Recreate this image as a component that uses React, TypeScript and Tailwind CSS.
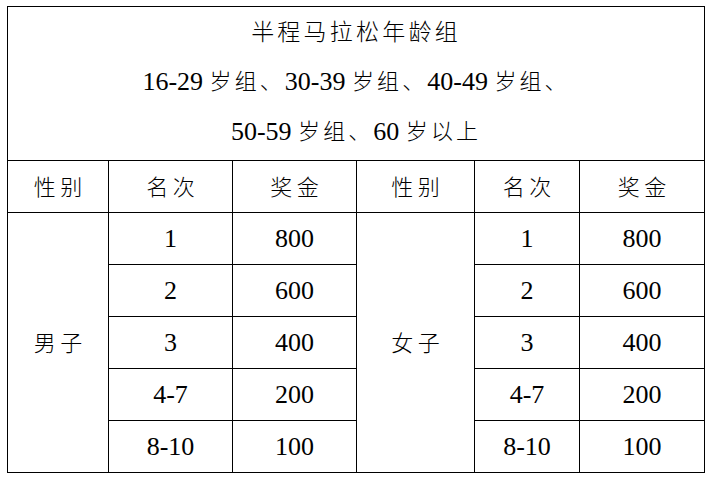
import React from "react";

const rows: { rank: string; prize: string }[] = [
  { rank: "1", prize: "800" },
  { rank: "2", prize: "600" },
  { rank: "3", prize: "400" },
  { rank: "4-7", prize: "200" },
  { rank: "8-10", prize: "100" },
];

const cell = "border border-black text-center align-middle p-0 h-[52px]";
const cjk = "font-light text-[22px] tracking-[0.2em] pl-[0.2em]";

// CJK text in the source is a thin Song face, set a little apart
const Han = ({ children }: { children: React.ReactNode }) => (
  <span className="font-light text-[22px] tracking-[0.14em]">{children}</span>
);

function App() {
  return (
    <div
      className="w-[714px] h-[478px] bg-white pt-[6px] pl-[7px] text-black text-[26px] leading-none"
      style={{ fontFamily: '"Liberation Serif", "Noto Sans CJK SC", serif' }}
    >
      <table className="table-fixed border-collapse w-[697px]">
        <colgroup>
          <col className="w-[101px]" />
          <col className="w-[124px]" />
          <col className="w-[124px]" />
          <col className="w-[118px]" />
          <col className="w-[105px]" />
          <col className="w-[125px]" />
        </colgroup>
        <tbody>
          <tr>
            <td colSpan={6} className="border border-black text-center h-[153px] p-0">
              <div className="flex flex-col items-center pb-[3px]">
                <div className="h-[50px] flex items-center">
                  <span className="font-light text-[23px] tracking-[0.14em]">半程马拉松年龄组</span>
                </div>
                <div className="h-[50px] flex items-center whitespace-pre">
                  16-29 <Han>岁组、</Han>30-39 <Han>岁组、</Han>40-49 <Han>岁组、</Han>
                </div>
                <div className="h-[50px] flex items-center whitespace-pre">
                  50-59 <Han>岁组、</Han>60 <Han>岁以上</Han>
                </div>
              </div>
            </td>
          </tr>
          <tr>
            {["性别", "名次", "奖金", "性别", "名次", "奖金"].map((h, i) => (
              <td key={i} className={cell}>
                <span className={cjk}>{h}</span>
              </td>
            ))}
          </tr>
          {rows.map((r, i) => (
            <tr key={r.rank}>
              {i === 0 && (
                <td rowSpan={5} className={cell}>
                  <span className={cjk}>男子</span>
                </td>
              )}
              <td className={cell}>{r.rank}</td>
              <td className={cell}>{r.prize}</td>
              {i === 0 && (
                <td rowSpan={5} className={cell}>
                  <span className={cjk}>女子</span>
                </td>
              )}
              <td className={cell}>{r.rank}</td>
              <td className={cell}>{r.prize}</td>
            </tr>
          ))}
        </tbody>
      </table>
    </div>
  );
}

export default App;
